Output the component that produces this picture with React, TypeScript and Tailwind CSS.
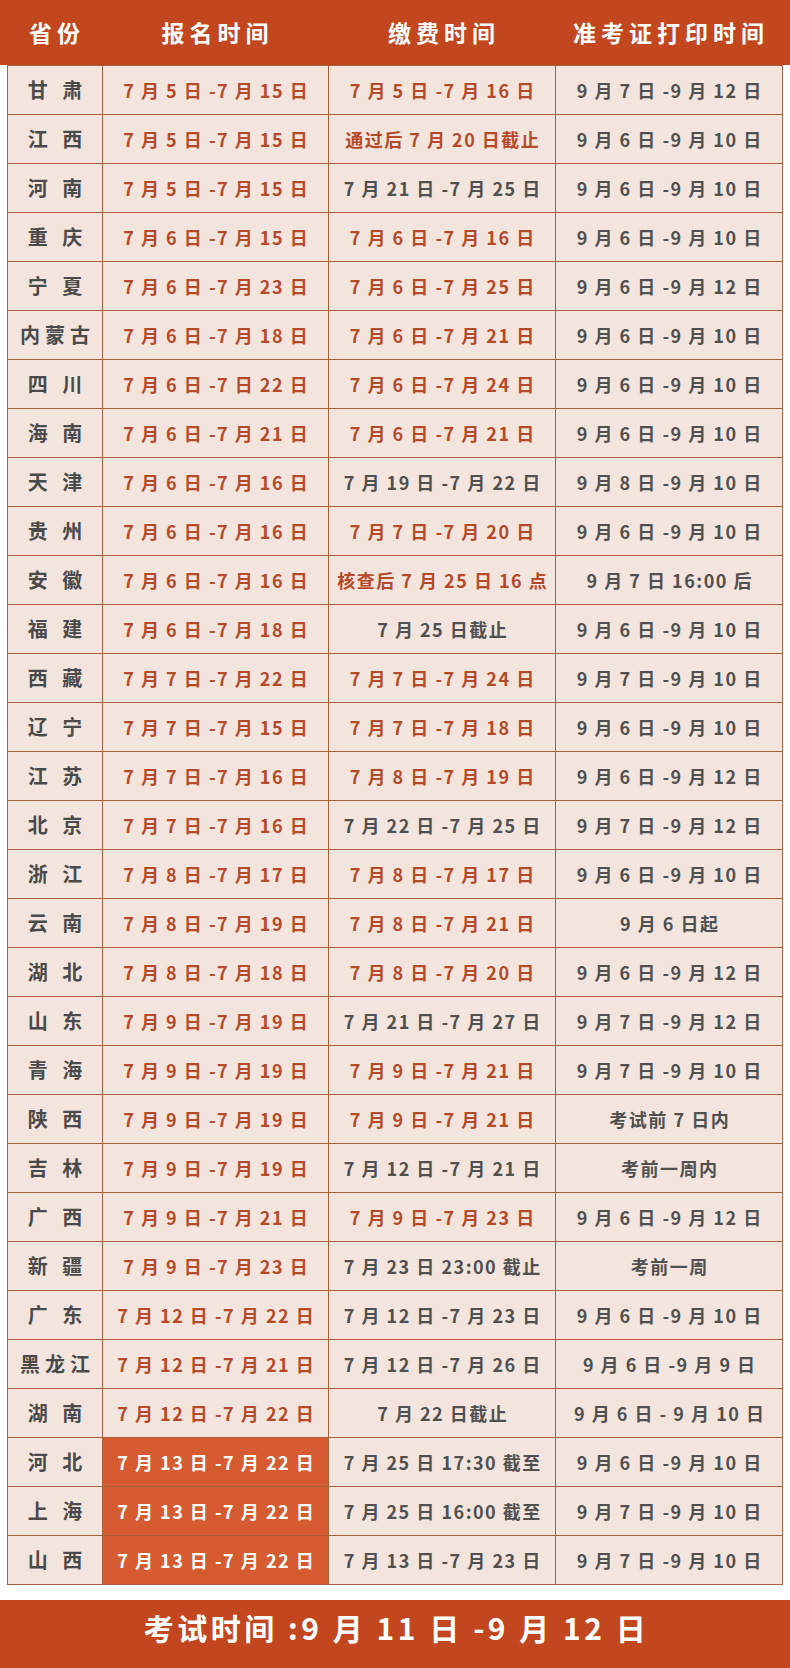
type Tone = "red" | "gray" | "hl";

interface Row {
  name: string;
  reg: string;
  regTone: Tone;
  fee: string;
  feeTone: Tone;
  card: string;
}

const rows: Row[] = [
  { name: "甘 肃", reg: "7 月 5 日 -7 月 15 日", regTone: "red", fee: "7 月 5 日 -7 月 16 日", feeTone: "red", card: "9 月 7 日 -9 月 12 日" },
  { name: "江 西", reg: "7 月 5 日 -7 月 15 日", regTone: "red", fee: "通过后 7 月 20 日截止", feeTone: "red", card: "9 月 6 日 -9 月 10 日" },
  { name: "河 南", reg: "7 月 5 日 -7 月 15 日", regTone: "red", fee: "7 月 21 日 -7 月 25 日", feeTone: "gray", card: "9 月 6 日 -9 月 10 日" },
  { name: "重 庆", reg: "7 月 6 日 -7 月 15 日", regTone: "red", fee: "7 月 6 日 -7 月 16 日", feeTone: "red", card: "9 月 6 日 -9 月 10 日" },
  { name: "宁 夏", reg: "7 月 6 日 -7 月 23 日", regTone: "red", fee: "7 月 6 日 -7 月 25 日", feeTone: "red", card: "9 月 6 日 -9 月 12 日" },
  { name: "内蒙古", reg: "7 月 6 日 -7 月 18 日", regTone: "red", fee: "7 月 6 日 -7 月 21 日", feeTone: "red", card: "9 月 6 日 -9 月 10 日" },
  { name: "四 川", reg: "7 月 6 日 -7 日 22 日", regTone: "red", fee: "7 月 6 日 -7 月 24 日", feeTone: "red", card: "9 月 6 日 -9 月 10 日" },
  { name: "海 南", reg: "7 月 6 日 -7 月 21 日", regTone: "red", fee: "7 月 6 日 -7 月 21 日", feeTone: "red", card: "9 月 6 日 -9 月 10 日" },
  { name: "天 津", reg: "7 月 6 日 -7 月 16 日", regTone: "red", fee: "7 月 19 日 -7 月 22 日", feeTone: "gray", card: "9 月 8 日 -9 月 10 日" },
  { name: "贵 州", reg: "7 月 6 日 -7 月 16 日", regTone: "red", fee: "7 月 7 日 -7 月 20 日", feeTone: "red", card: "9 月 6 日 -9 月 10 日" },
  { name: "安 徽", reg: "7 月 6 日 -7 月 16 日", regTone: "red", fee: "核查后 7 月 25 日 16 点", feeTone: "red", card: "9 月 7 日 16:00 后" },
  { name: "福 建", reg: "7 月 6 日 -7 月 18 日", regTone: "red", fee: "7 月 25 日截止", feeTone: "gray", card: "9 月 6 日 -9 月 10 日" },
  { name: "西 藏", reg: "7 月 7 日 -7 月 22 日", regTone: "red", fee: "7 月 7 日 -7 月 24 日", feeTone: "red", card: "9 月 7 日 -9 月 10 日" },
  { name: "辽 宁", reg: "7 月 7 日 -7 月 15 日", regTone: "red", fee: "7 月 7 日 -7 月 18 日", feeTone: "red", card: "9 月 6 日 -9 月 10 日" },
  { name: "江 苏", reg: "7 月 7 日 -7 月 16 日", regTone: "red", fee: "7 月 8 日 -7 月 19 日", feeTone: "red", card: "9 月 6 日 -9 月 12 日" },
  { name: "北 京", reg: "7 月 7 日 -7 月 16 日", regTone: "red", fee: "7 月 22 日 -7 月 25 日", feeTone: "gray", card: "9 月 7 日 -9 月 12 日" },
  { name: "浙 江", reg: "7 月 8 日 -7 月 17 日", regTone: "red", fee: "7 月 8 日 -7 月 17 日", feeTone: "red", card: "9 月 6 日 -9 月 10 日" },
  { name: "云 南", reg: "7 月 8 日 -7 月 19 日", regTone: "red", fee: "7 月 8 日 -7 月 21 日", feeTone: "red", card: "9 月 6 日起" },
  { name: "湖 北", reg: "7 月 8 日 -7 月 18 日", regTone: "red", fee: "7 月 8 日 -7 月 20 日", feeTone: "red", card: "9 月 6 日 -9 月 12 日" },
  { name: "山 东", reg: "7 月 9 日 -7 月 19 日", regTone: "red", fee: "7 月 21 日 -7 月 27 日", feeTone: "gray", card: "9 月 7 日 -9 月 12 日" },
  { name: "青 海", reg: "7 月 9 日 -7 月 19 日", regTone: "red", fee: "7 月 9 日 -7 月 21 日", feeTone: "red", card: "9 月 7 日 -9 月 10 日" },
  { name: "陕 西", reg: "7 月 9 日 -7 月 19 日", regTone: "red", fee: "7 月 9 日 -7 月 21 日", feeTone: "red", card: "考试前 7 日内" },
  { name: "吉 林", reg: "7 月 9 日 -7 月 19 日", regTone: "red", fee: "7 月 12 日 -7 月 21 日", feeTone: "gray", card: "考前一周内" },
  { name: "广 西", reg: "7 月 9 日 -7 月 21 日", regTone: "red", fee: "7 月 9 日 -7 月 23 日", feeTone: "red", card: "9 月 6 日 -9 月 12 日" },
  { name: "新 疆", reg: "7 月 9 日 -7 月 23 日", regTone: "red", fee: "7 月 23 日 23:00 截止", feeTone: "gray", card: "考前一周" },
  { name: "广 东", reg: "7 月 12 日 -7 月 22 日", regTone: "red", fee: "7 月 12 日 -7 月 23 日", feeTone: "gray", card: "9 月 6 日 -9 月 10 日" },
  { name: "黑龙江", reg: "7 月 12 日 -7 月 21 日", regTone: "red", fee: "7 月 12 日 -7 月 26 日", feeTone: "gray", card: "9 月 6 日 -9 月 9 日" },
  { name: "湖 南", reg: "7 月 12 日 -7 月 22 日", regTone: "red", fee: "7 月 22 日截止", feeTone: "gray", card: "9 月 6 日 - 9 月 10 日" },
  { name: "河 北", reg: "7 月 13 日 -7 月 22 日", regTone: "hl", fee: "7 月 25 日 17:30 截至", feeTone: "gray", card: "9 月 6 日 -9 月 10 日" },
  { name: "上 海", reg: "7 月 13 日 -7 月 22 日", regTone: "hl", fee: "7 月 25 日 16:00 截至", feeTone: "gray", card: "9 月 7 日 -9 月 10 日" },
  { name: "山 西", reg: "7 月 13 日 -7 月 22 日", regTone: "hl", fee: "7 月 13 日 -7 月 23 日", feeTone: "gray", card: "9 月 7 日 -9 月 10 日" },
];

const font = { fontFamily: '"Noto Sans CJK SC", "Noto Sans", sans-serif' };

function Cell({ text, tone }: { text: string; tone: Tone }) {
  const cls =
    tone === "hl"
      ? "bg-[#d65b31] text-white"
      : tone === "red"
        ? "bg-[#f3e5dd] text-[#b44a2a]"
        : "bg-[#f3e5dd] text-[#505050]";
  return (
    <div className={`flex items-center justify-center h-[48px] text-[18px] font-bold whitespace-nowrap tracking-[1.5px] pl-[1.5px] ${cls}`}>
      {text}
    </div>
  );
}

export default function App() {
  return (
    <div className="w-[790px] bg-white" style={font}>
      {/* Header */}
      <div className="h-[65px] bg-[#c2471f] px-[7px]">
        <div className="grid grid-cols-[95px_226px_227px_227px] h-full items-center text-white text-[23px] font-bold tracking-[5px]">
          <div className="text-center pl-[5px]">省份</div>
          <div className="text-center pl-[5px]">报名时间</div>
          <div className="text-center pl-[5px]">缴费时间</div>
          <div className="text-center pl-[5px]">准考证打印时间</div>
        </div>
      </div>

      {/* Table */}
      <div className="mx-[7px] grid grid-cols-[94px_225px_226px_226px] gap-px p-px bg-[#a8603c]">
        {rows.map((r) => (
          <div key={r.name} className="contents">
            <div className="flex items-center justify-center h-[48px] bg-[#f3e5dd] text-[#4a4a4a] text-[20px] font-bold whitespace-nowrap tracking-[5px] pl-[5px]">
              {r.name}
            </div>
            <Cell text={r.reg} tone={r.regTone} />
            <Cell text={r.fee} tone={r.feeTone} />
            <Cell text={r.card} tone="gray" />
          </div>
        ))}
      </div>

      {/* Footer */}
      <div className="mt-[15px] h-[80px] bg-[#c2471f] flex justify-center pt-[7px]">
        <div className="text-white text-[30px] font-bold tracking-[3.5px] leading-[40px] pl-[3px]">
          考试时间 :9 月 11 日 -9 月 12 日
        </div>
      </div>
    </div>
  );
}
